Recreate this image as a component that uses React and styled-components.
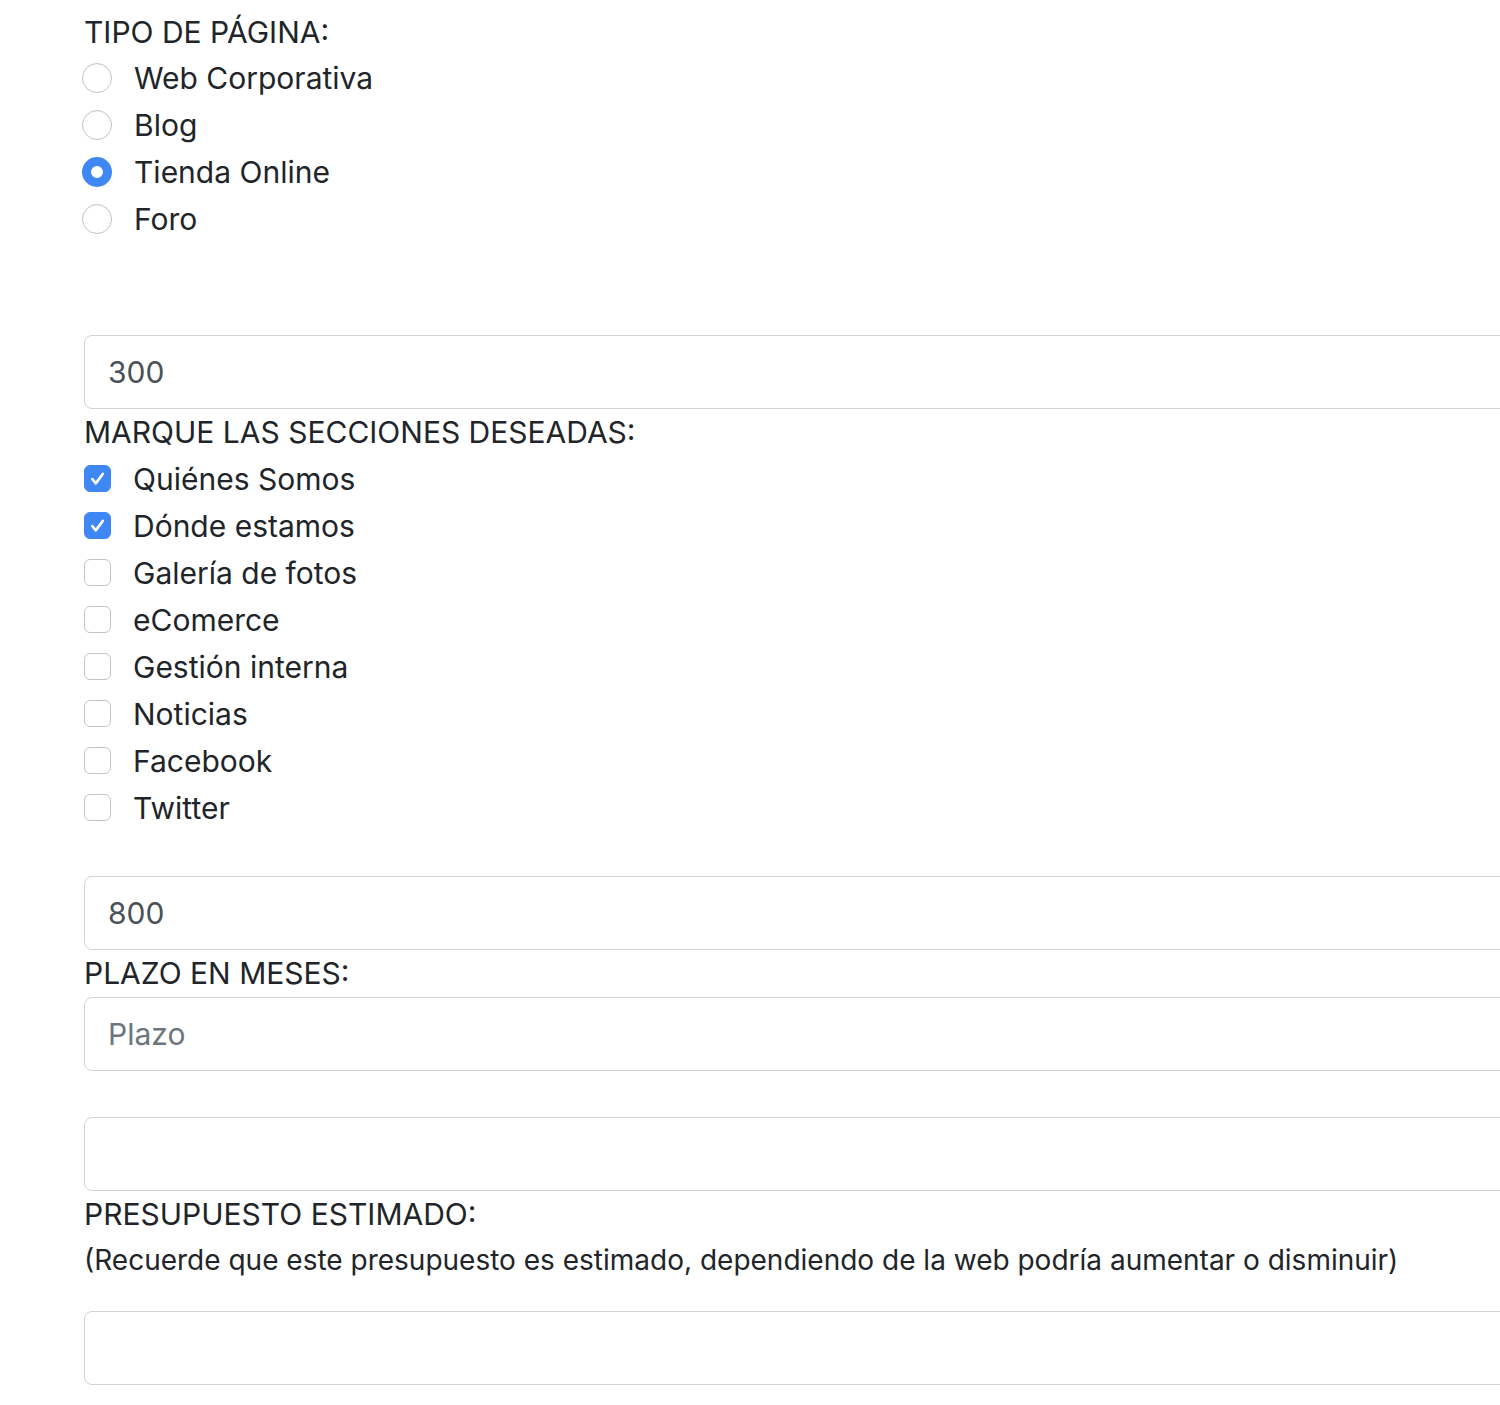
import React, { useState } from "react";
import styled, { createGlobalStyle } from "styled-components";

const GlobalStyle = createGlobalStyle`
  html, body {
    margin: 0;
    padding: 0;
    background: #ffffff;
    overflow: hidden;
  }
  body {
    font-family: Inter, "Liberation Sans", sans-serif;
    color: #212529;
  }
`;

const Page = styled.form`
  width: 1600px;
  padding: 9px 0 0 84px;
  box-sizing: border-box;
`;

const Label = styled.div`
  font-size: 30px;
  line-height: 47px;
  color: #212529;
  text-transform: uppercase;
`;

const Note = styled.p`
  margin: -1px 0 ${(p) => p.$after || 0}px;
  font-size: 28px;
  line-height: 47px;
`;

const OptionList = styled.div`
  display: flex;
  flex-direction: column;
  margin-top: ${(p) => p.$before || 0}px;
  margin-bottom: ${(p) => p.$after || 0}px;
`;

const Option = styled.label`
  display: flex;
  align-items: center;
  height: 47px;
  gap: 22px;
  font-size: 30px;
  color: #212529;
  cursor: pointer;
`;

const Radio = styled.input.attrs({ type: "radio" })`
  appearance: none;
  margin: 0 0 0 -2px;
  width: 30px;
  height: 30px;
  border-radius: 50%;
  border: 1.5px solid #c4c4c4;
  background: #fff;
  box-sizing: border-box;
  box-shadow: inset 0 1px 1px rgba(0, 0, 0, 0.05);

  &:checked {
    border: 9.5px solid #3f87f5;
    background: #fff;
    box-shadow: none;
  }
`;

const Check = styled.input.attrs({ type: "checkbox" })`
  appearance: none;
  margin: 0;
  width: 27px;
  height: 27px;
  border-radius: 6px;
  border: 1.5px solid #c4c4c4;
  background: #fff;
  box-sizing: border-box;

  &:checked {
    border-color: #3f87f5;
    background: #3f87f5 no-repeat center / 21px 21px
      url("data:image/svg+xml;utf8,<svg xmlns='http://www.w3.org/2000/svg' viewBox='0 0 16 16'><path d='M4 8.4l2.7 3.3 5.3-7.2' fill='none' stroke='white' stroke-width='2' stroke-linecap='round' stroke-linejoin='round'/></svg>");
  }
`;

const TextInput = styled.input`
  display: block;
  width: 100%;
  height: 74px;
  padding: 0 23px;
  margin: 0 0 ${(p) => p.$after || 0}px;
  box-sizing: border-box;
  border: 1.5px solid #ced4da;
  border-radius: 8px;
  font-family: inherit;
  font-size: 30px;
  color: #495057;
  background: #fff;
  outline: none;

  &::placeholder {
    color: #6c757d;
  }
`;

const tipos = ["Web Corporativa", "Blog", "Tienda Online", "Foro"];

const secciones = [
  { name: "Quiénes Somos", on: true },
  { name: "Dónde estamos", on: true },
  { name: "Galería de fotos", on: false },
  { name: "eComerce", on: false },
  { name: "Gestión interna", on: false },
  { name: "Noticias", on: false },
  { name: "Facebook", on: false },
  { name: "Twitter", on: false },
];

export default function App() {
  const [tipo, setTipo] = useState("Tienda Online");
  const [checks, setChecks] = useState(secciones.map((s) => s.on));

  const toggle = (i) =>
    setChecks((prev) => prev.map((v, j) => (j === i ? !v : v)));

  return (
    <>
      <GlobalStyle />
      <Page onSubmit={(e) => e.preventDefault()}>
        <Label>Tipo de página:</Label>
        <OptionList $before={-2} $after={93}>
          {tipos.map((t) => (
            <Option key={t}>
              <Radio
                name="tipo"
                checked={tipo === t}
                onChange={() => setTipo(t)}
              />
              {t}
            </Option>
          ))}
        </OptionList>

        <TextInput defaultValue="300" readOnly />
        <Label>Marque las secciones deseadas:</Label>
        <OptionList $before={-1} $after={45}>
          {secciones.map((s, i) => (
            <Option key={s.name}>
              <Check checked={checks[i]} onChange={() => toggle(i)} />
              {s.name}
            </Option>
          ))}
        </OptionList>

        <TextInput defaultValue="800" readOnly />
        <Label>Plazo en meses:</Label>
        <TextInput placeholder="Plazo" $after={46} />

        <TextInput readOnly />
        <Label>Presupuesto estimado:</Label>
        <Note $after={27}>
          (Recuerde que este presupuesto es estimado, dependiendo de la web
          podría aumentar o disminuir)
        </Note>
        <TextInput readOnly />
      </Page>
    </>
  );
}
